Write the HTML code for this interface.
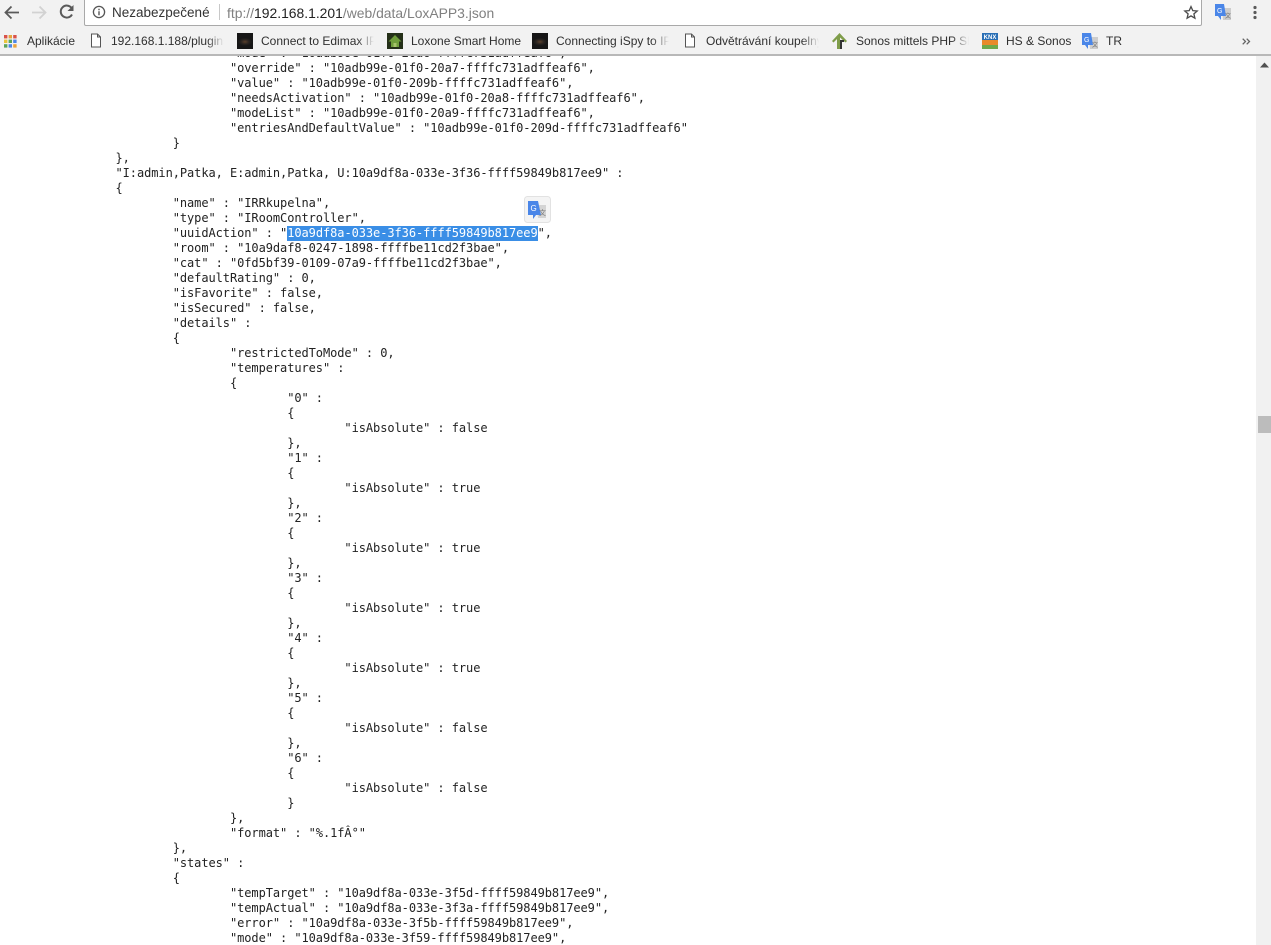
<!DOCTYPE html>
<html>
<head>
<meta charset="utf-8">
<title>LoxAPP3.json</title>
<style>
html,body{margin:0;padding:0;width:1271px;height:945px;overflow:hidden;background:#fff}
body{position:relative;font-family:"Liberation Sans",sans-serif}
#top{position:absolute;left:0;top:0;width:1271px;height:55px;background:#f2f2f2;z-index:5}
#line{position:absolute;left:0;top:54px;width:1271px;height:2px;background:#b8b8b8;z-index:6}
#addr{position:absolute;left:84px;top:-1px;width:1116px;height:25px;background:#fff;border:1px solid #a9a9a9;border-radius:0 0 2px 2px}
.t{position:absolute;font-size:12px;color:#303030;white-space:nowrap;line-height:16px}
.fade{display:inline-block;overflow:hidden;vertical-align:top;-webkit-mask-image:linear-gradient(90deg,#000 85%,transparent);mask-image:linear-gradient(90deg,#000 85%,transparent)}
svg{position:absolute;display:block}
pre{position:absolute;left:1px;top:46px;margin:0;font-family:"DejaVu Sans Mono",monospace;font-size:12px;letter-spacing:-0.07px;line-height:15px;tab-size:8;color:#222}
.sel{background:#3a8ee6;color:#fff;display:inline-block;height:15px}
#sb{position:absolute;left:1256px;top:56px;width:15px;height:889px;background:#f1f1f1;z-index:4}
#th{position:absolute;left:2px;top:360px;width:13px;height:17px;background:#bcbcbc}
.cam{position:absolute;width:16px;height:16px;background:radial-gradient(ellipse 7px 4px at 50% 55%,#5a3f2a 0,#2a2420 55%,#161616 100%)}
</style>
</head>
<body>
<pre>				"mode" : "10adb99e-01f0-20a6-ffffc731adffeaf6",
				"override" : "10adb99e-01f0-20a7-ffffc731adffeaf6",
				"value" : "10adb99e-01f0-209b-ffffc731adffeaf6",
				"needsActivation" : "10adb99e-01f0-20a8-ffffc731adffeaf6",
				"modeList" : "10adb99e-01f0-20a9-ffffc731adffeaf6",
				"entriesAndDefaultValue" : "10adb99e-01f0-209d-ffffc731adffeaf6"
			}
		},
		"I:admin,Patka, E:admin,Patka, U:10a9df8a-033e-3f36-ffff59849b817ee9" :
		{
			"name" : "IRRkupelna",
			"type" : "IRoomController",
			"uuidAction" : "<span class="sel">10a9df8a-033e-3f36-ffff59849b817ee9</span>",
			"room" : "10a9daf8-0247-1898-ffffbe11cd2f3bae",
			"cat" : "0fd5bf39-0109-07a9-ffffbe11cd2f3bae",
			"defaultRating" : 0,
			"isFavorite" : false,
			"isSecured" : false,
			"details" :
			{
				"restrictedToMode" : 0,
				"temperatures" :
				{
					"0" :
					{
						"isAbsolute" : false
					},
					"1" :
					{
						"isAbsolute" : true
					},
					"2" :
					{
						"isAbsolute" : true
					},
					"3" :
					{
						"isAbsolute" : true
					},
					"4" :
					{
						"isAbsolute" : true
					},
					"5" :
					{
						"isAbsolute" : false
					},
					"6" :
					{
						"isAbsolute" : false
					}
				},
				"format" : "%.1fÂ°"
			},
			"states" :
			{
				"tempTarget" : "10a9df8a-033e-3f5d-ffff59849b817ee9",
				"tempActual" : "10a9df8a-033e-3f3a-ffff59849b817ee9",
				"error" : "10a9df8a-033e-3f5b-ffff59849b817ee9",
				"mode" : "10a9df8a-033e-3f59-ffff59849b817ee9",
</pre>

<svg style="left:524px;top:196px;z-index:3" width="28" height="28" viewBox="0 0 28 28">
<rect x="0.5" y="0.5" width="26" height="26" rx="3" fill="#f4f4f4" stroke="#e2e2e2"/>
<path d="M12 9h10v13H14z" fill="#d4d4d4"/>
<path d="M4 5h10l3 14h-5l-3 4v-4H4z" fill="#4a86e8"/>
<text x="6.5" y="15" font-family="Liberation Sans" font-size="8" fill="#fff">G</text>
<text x="15" y="19" font-family="Noto Sans CJK SC" font-size="7" fill="#777">文</text>
</svg>

<div id="top">
  <svg style="left:4px;top:5px" width="16" height="15" viewBox="0 0 16 15"><path d="M15 7.5H2M7.5 1.5l-6 6 6 6" fill="none" stroke="#5a5a5a" stroke-width="1.8"/></svg>
  <svg style="left:31px;top:5px" width="16" height="15" viewBox="0 0 16 15"><path d="M1 7.5h13M8.5 1.5l6 6-6 6" fill="none" stroke="#d2d2d2" stroke-width="1.8"/></svg>
  <svg style="left:59px;top:4px" width="16" height="16" viewBox="0 0 16 16"><path d="M13 10.5A6 6 0 1 1 12.6 4" fill="none" stroke="#5a5a5a" stroke-width="2"/><path d="M14.5 1v6h-6z" fill="#5a5a5a"/></svg>
  <div id="addr"></div>
  <svg style="left:92px;top:5px" width="14" height="14" viewBox="0 0 14 14"><circle cx="7" cy="7" r="5.6" fill="none" stroke="#555" stroke-width="1.3"/><path d="M7 6.2v4M7 3.8v1.5" stroke="#555" stroke-width="1.4"/></svg>
  <div class="t" style="left:112px;top:5px;font-size:13.5px;color:#333">Nezabezpečené</div>
  <div style="position:absolute;left:219px;top:4px;width:1px;height:16px;background:#c8c8c8"></div>
  <div class="t" style="left:227px;top:5px;font-size:13.9px;color:#808080">ftp://<span style="color:#222">192.168.1.201</span>/web/data/LoxAPP3.json</div>
  <svg style="left:1183px;top:5px" width="16" height="15" viewBox="0 0 16 15"><path d="M8 1.6l1.8 4 4.4.4-3.3 2.9 1 4.3L8 10.9l-3.9 2.3 1-4.3L1.8 6l4.4-.4z" fill="none" stroke="#4a4a4a" stroke-width="1.3"/></svg>
  <svg style="left:1214px;top:3px" width="18" height="18" viewBox="0 0 18 18"><path d="M8 5h9v12H9z" fill="#cdcdcd"/><path d="M1 1h9l2 12H7v4l-3-4H1z" fill="#4a86e8"/><text x="3" y="10" font-family="Liberation Sans" font-size="7" fill="#fff">G</text><text x="11" y="15" font-family="Noto Sans CJK SC" font-size="6" fill="#666">文</text></svg>
  <svg style="left:1252px;top:5px" width="6" height="16" viewBox="0 0 6 16"><circle cx="3" cy="2.5" r="1.6" fill="#5a5a5a"/><circle cx="3" cy="7.5" r="1.6" fill="#5a5a5a"/><circle cx="3" cy="12.5" r="1.6" fill="#5a5a5a"/></svg>

  <svg style="left:3px;top:34px" width="15" height="15" viewBox="0 0 15 15">
    <g><rect x="1" y="1" width="3.4" height="3.4" fill="#d9534a"/><rect x="5.6" y="1" width="3.4" height="3.4" fill="#e8a33c"/><rect x="10.2" y="1" width="3.4" height="3.4" fill="#d9534a"/>
    <rect x="1" y="5.6" width="3.4" height="3.4" fill="#e9c53c"/><rect x="5.6" y="5.6" width="3.4" height="3.4" fill="#5aa35a"/><rect x="10.2" y="5.6" width="3.4" height="3.4" fill="#4a86e8"/>
    <rect x="1" y="10.2" width="3.4" height="3.4" fill="#5aa35a"/><rect x="5.6" y="10.2" width="3.4" height="3.4" fill="#4a86e8"/><rect x="10.2" y="10.2" width="3.4" height="3.4" fill="#e8a33c"/></g>
  </svg>
  <div class="t" style="left:27px;top:33px">Aplikácie</div>

  <svg style="left:90px;top:33px" width="12" height="15" viewBox="0 0 12 15"><path d="M1.5 1h6l3 3v10h-9zM7.5 1v3h3" fill="#fff" stroke="#555" stroke-width="1"/></svg>
  <div class="t fade" style="left:111px;top:33px;width:113px">192.168.1.188/plugins/</div>

  <div class="cam" style="left:237px;top:33px"></div>
  <div class="t fade" style="left:261px;top:33px;width:113px">Connect to Edimax IP Camera</div>

  <div style="position:absolute;left:387px;top:33px;width:16px;height:16px;background:#243018"></div>
  <svg style="left:387px;top:33px" width="16" height="16" viewBox="0 0 16 16"><path d="M8 2L1.5 8.5H4V14h8V8.5h2.5z" fill="#6f9e3a"/><path d="M6.5 10h3v4h-3z" fill="#a7c46a"/></svg>
  <div class="t" style="left:411px;top:33px">Loxone Smart Home</div>

  <div class="cam" style="left:532px;top:33px"></div>
  <div class="t fade" style="left:556px;top:33px;width:113px">Connecting iSpy to IP Cam</div>

  <svg style="left:684px;top:33px" width="12" height="15" viewBox="0 0 12 15"><path d="M1.5 1h6l3 3v10h-9zM7.5 1v3h3" fill="#fff" stroke="#555" stroke-width="1"/></svg>
  <div class="t fade" style="left:706px;top:33px;width:113px">Odvětrávání koupelny s</div>

  <svg style="left:831px;top:32px" width="17" height="18" viewBox="0 0 17 18"><path d="M8.5 1L1 9l1.5 1.5L6 7v10h3V5.5l5.5 5L16 9z" fill="#7f9d4a"/><path d="M9 8h4v2h-2v7H9z" fill="#333"/></svg>
  <div class="t fade" style="left:856px;top:33px;width:113px">Sonos mittels PHP Skript</div>

  <div style="position:absolute;left:982px;top:33px;width:16px;height:16px;background:linear-gradient(#2a6fb5 0 45%,#e88a2a 45% 75%,#6fa84a 75%)"></div>
  <div style="position:absolute;left:982px;top:35px;width:16px;font-size:6px;line-height:7px;font-weight:bold;color:#fff;text-align:center">KNX</div>
  <div class="t" style="left:1006px;top:33px">HS &amp; Sonos</div>

  <svg style="left:1081px;top:32px" width="18" height="18" viewBox="0 0 18 18"><path d="M8 5h9v12H9z" fill="#cdcdcd"/><path d="M1 1h9l2 12H7v4l-3-4H1z" fill="#4a86e8"/><text x="3" y="10" font-family="Liberation Sans" font-size="7" fill="#fff">G</text><text x="11" y="15" font-family="Noto Sans CJK SC" font-size="6" fill="#666">文</text></svg>
  <div class="t" style="left:1106px;top:33px">TR</div>
  <svg style="left:1242px;top:38px" width="9" height="7" viewBox="0 0 9 7"><path d="M.7.7l2.8 2.8L.7 6.3M4.7.7l2.8 2.8-2.8 2.8" fill="none" stroke="#666" stroke-width="1.3"/></svg>
</div>
<div id="line"></div>

<div id="sb">
  <svg style="left:4px;top:6px" width="9" height="6" viewBox="0 0 9 6"><path d="M4.5 0.5L9 5.5H0z" fill="#505050"/></svg>
  <div id="th"></div>
</div>
</body>
</html>
